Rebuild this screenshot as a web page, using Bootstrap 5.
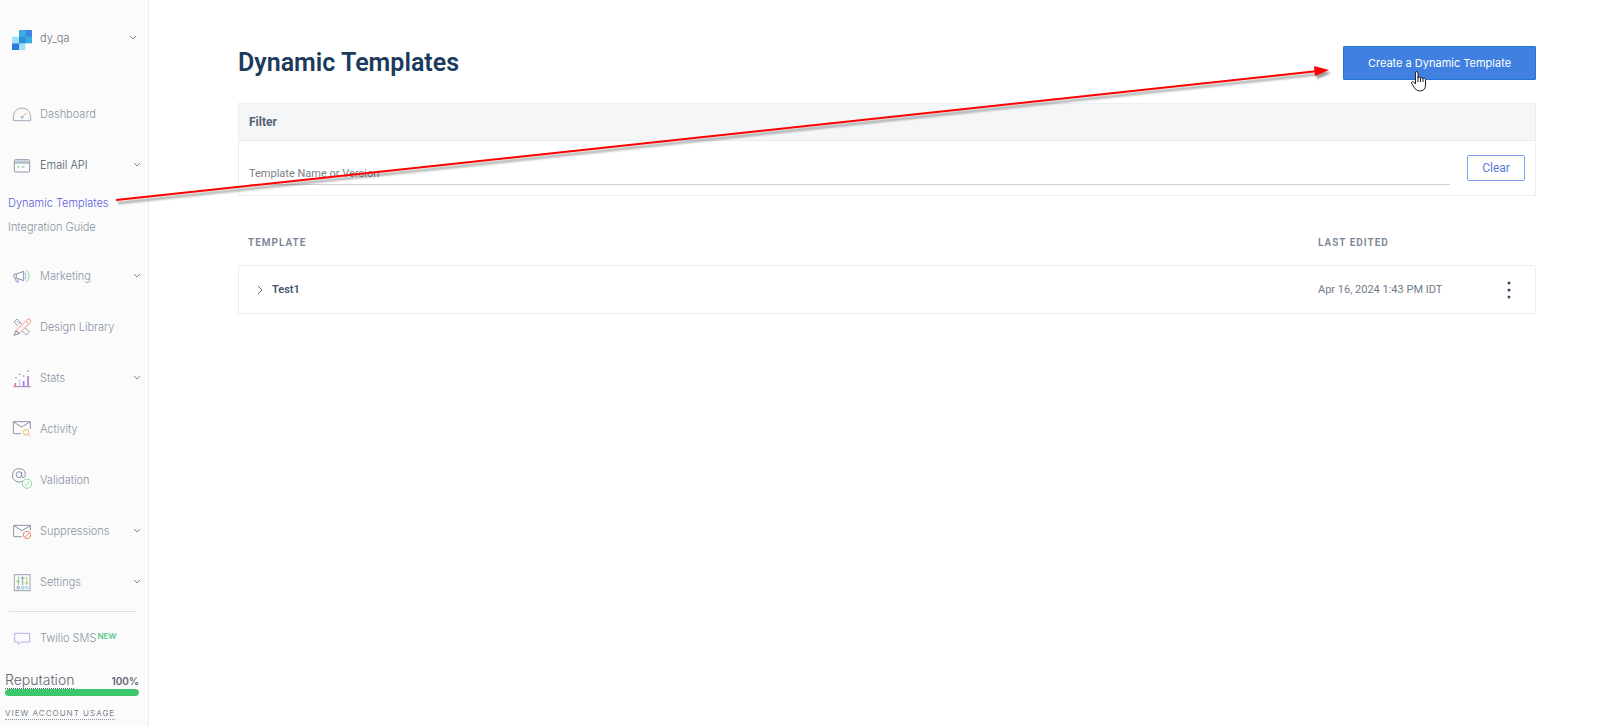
<!DOCTYPE html>
<html lang="en">
<head>
<meta charset="utf-8">
<meta name="viewport" content="width=device-width, initial-scale=1">
<title>Dynamic Templates</title>
<link href="https://cdn.jsdelivr.net/npm/bootstrap@5.3.0/dist/css/bootstrap.min.css" rel="stylesheet">
<style>
  body { font-family: Roboto, "Liberation Sans", sans-serif; font-size: 12px; line-height: 20px; color: #6f7a88; background: #fff; }
  svg { display: block; }
  .sidebar { width: 149px; background: #fbfbfb; border-right: 1px solid #e9ecf1; font-family: Inter, sans-serif; font-size: 11px; font-weight: 300; color: #8a93a5; }
  .sidebar a, .sidebar button { color: inherit; text-decoration: none; font-weight: inherit; font-size: inherit; }
  .sidebar .account { height: 80px; margin-bottom: 8px; color: #6b7380; }
  .side-item { height: 51px; padding: 0 8px 0 12px; gap: 8px; text-align: left; }
  .side-item.open { color: #4d5a6c; }
  .side-item .pic { width: 20px; height: 20px; flex: none; }
  .side-item .chev { width: 6px; height: 6px; flex: none; margin-left: auto; fill: none; stroke: #7b8696; stroke-width: 1; }
  .sub-menu { padding: 1px 0 11px 8px; }
  .sub-link { height: 24px; line-height: 24px; }
  .sidebar a.current { color: #5b62dc; }
  .divider { height: 1px; margin: 4px 12px 0 9px; background: #dcdee2; }
  .new-tag { font-size: 8px; font-weight: 600; color: #5cc98a; line-height: 16px; padding-left: 1px; }
  .reputation { padding: 8px 9px 0 5px; }
  .sidebar .rep-title { font-size: 14px; line-height: 17px; border-bottom: 1px dotted #5c6674; color: #5c6674; }
  .rep-value { font-size: 10px; font-weight: 600; line-height: 16px; color: #5c6674; }
  .meter { height: 7px; border-radius: 4px; background: #dfe5ea; }
  .meter .progress-bar { background: #3dc76d; border-radius: 4px; }
  .sidebar .usage { font-size: 8px; font-weight: 400; letter-spacing: 1px; line-height: 11px; margin-top: 12px; border-bottom: 1px dotted #8c949f; color: #7b8490; }
  .page { padding: 46px 64px 40px 89px; }
  h1 { font-family: Roboto, sans-serif; font-size: 25px; line-height: 34px; font-weight: 600; color: #1b3a5c; }
  .btn-create { height: 34px; width: 193px; padding: 0; border-radius: 1px; font-family: Inter, sans-serif; font-size: 11px; color: #fff; background: #3f80e0; border: 1px solid #2475d9; }
  .btn-create:hover { color: #fff; background: #2f72d6; }
  .filter-box { margin-top: 23px; border: 1px solid #eceef0; }
  .filter-head { height: 37px; padding: 0 10px; background: #f4f6f8; border-bottom: 1px solid #e9ebee; font-weight: 700; color: #546375; }
  .filter-body { padding: 14px 10px 10px; gap: 17px; height: 54px; }
  .filter-input { height: 24px; margin-top: 6px; padding: 2px 0 0; border: 0; border-bottom: 1px solid #cfd1d4; border-radius: 0; font-size: 11px; line-height: 20px; color: #5a6573; background: transparent; }
  .filter-input::placeholder { color: #7d8085; }
  .btn-clear { width: 58px; height: 26px; padding: 0; border: 1px solid #7ba5ec; border-radius: 2px; font-size: 12px; line-height: 20px; color: #6079db; }
  .tpl-table { margin-top: 23px; border-collapse: separate; border-spacing: 0; }
  .tpl-table th { height: 46px; padding: 2px 0 0 10px; font-size: 10px; font-weight: 600; letter-spacing: 1px; color: #7a8594; }
  .tpl-table td { height: 49px; padding: 0; border: solid #ededee; border-width: 1px 0; font-size: 11px; color: #6f7a88; }
  .tpl-table td:first-child { border-left-width: 1px; border-radius: 2px 0 0 2px; }
  .tpl-table td:last-child { border-right-width: 1px; border-radius: 0 2px 2px 0; }
  .tpl-table .when { width: 170px; padding-left: 0; }
  .tpl-table .acts { width: 48px; padding: 0; }
  .tpl-name { padding: 0 17px; gap: 8px; font-size: 11px; line-height: 20px; font-weight: 600; color: #46566a; }
  .pointer-layer { height: 240px; pointer-events: none; }
</style>
</head>
<body>
<div class="d-flex min-vh-100 position-relative">
  <nav class="sidebar d-flex flex-column flex-shrink-0" aria-label="Main">
    <button type="button" class="account btn p-0 border-0 rounded-0 d-flex align-items-center w-100">
      <span class="side-item d-flex align-items-center w-100 pe-2">
        <svg class="pic" viewBox="0 0 60 60"><path fill="#36aee4" d="M21 0h39v40H21z"/><path fill="#4182e0" d="M41 0h19v20H41z"/><path fill="#9fe1f4" d="M0 20h21v20H0zM21 40h19v20H21z"/><path fill="#2d93d8" d="M21 20h20v20H21z"/><path fill="#287be0" d="M0 40h21v20H0z"/></svg>
        <span class="pb-1">dy_qa</span>
        <svg class="chev me-1 mb-1" viewBox="1 1 6 6"><path d="M1 2l3 3 3-3"/></svg>
      </span>
    </button>
    <a href="#" class="side-item d-flex align-items-center">
      <svg class="pic" viewBox="36 312 60 60" fill="none" stroke-width="3"><path stroke="#a3acba" d="M40 362V350a26 26 0 0 1 52 0v12z"/><path stroke="#f6dc96" stroke-dasharray="3 8" d="M47 352a19 19 0 0 1 38 0"/><path stroke="#ef9a8c" d="M68 350l11-11"/><circle cx="66" cy="352" r="3" stroke="#88a5d2"/></svg>
      <span>Dashboard</span>
    </a>
    <a href="#" class="side-item open d-flex align-items-center">
      <svg class="pic" viewBox="36 44 60 60" fill="none" stroke-width="3"><rect x="43" y="58" width="46" height="37" rx="3" stroke="#8d98a9"/><path fill="#c6ccd6" d="M44 60h44v7H44z"/><path stroke="#8d98a9" d="M43 68h46"/><path stroke="#72cf84" d="M52 76l5 4-5 4M64 80h10"/></svg>
      <span>Email API</span><svg class="chev" viewBox="1 1 6 6"><path d="M1 2l3 3 3-3"/></svg>
    </a>
    <div class="sub-menu d-flex flex-column">
      <a href="#" class="sub-link current">Dynamic Templates</a>
      <a href="#" class="sub-link">Integration Guide</a>
    </div>
    <a href="#" class="side-item d-flex align-items-center">
      <svg class="pic" viewBox="36 49 60 60" fill="none" stroke-width="3"><path stroke="#8793aa" d="M49 73l22-8v28l-22-8h-6q-3-6 0-12zM49 73v12"/><path stroke="#9a94d8" d="M46 86l3 11h6l-2-10"/><path stroke="#8ac4ee" d="M75 69q6 10 0 20"/><path stroke="#8bdca6" d="M80 61q15 18 0 36"/></svg>
      <span>Marketing</span><svg class="chev" viewBox="1 1 6 6"><path d="M1 2l3 3 3-3"/></svg>
    </a>
    <a href="#" class="side-item d-flex align-items-center">
      <svg class="pic" viewBox="36 202 60 60" fill="none" stroke-width="3"><path stroke="#9aa4b3" d="M42 217l9-9 9 9-3 4 4-2 4 6m9 9l15 12-10 10-15-14M42 217l12 12M50 215l4 4"/><path stroke="#ed9384" fill="#fbfbfb" d="M48 243l34-34q4-3 8 1t1 8L57 252zM77 214l9 9"/><path stroke="#8793a3" d="M48 243l-6 14 15-5zM48 243l9 9"/></svg>
      <span>Design Library</span>
    </a>
    <a href="#" class="side-item d-flex align-items-center">
      <svg class="pic" viewBox="36 353 60 60" fill="none" stroke-width="5"><path stroke="#8a86a8" stroke-width="3" d="M40 409h52"/><path stroke="#e8709c" d="M46 398v10"/><path stroke="#e5c4ec" d="M59 387v21"/><path stroke="#9a7ce8" d="M71 392v16"/><path stroke="#b577cc" d="M84 377v31"/><path fill="#7d879c" d="M46 380h4v4h-4zM57 370h4v4h-4zM69 375h4v4h-4zM82 360h4v4h-4z"/></svg>
      <span>Stats</span><svg class="chev" viewBox="1 1 6 6"><path d="M1 2l3 3 3-3"/></svg>
    </a>
    <a href="#" class="side-item d-flex align-items-center">
      <svg class="pic" viewBox="36 56 60 60" fill="none" stroke-width="3"><path stroke="#8a94a6" d="M63 100H40V64h51v22M41 65l24 15 25-15"/><circle cx="78" cy="96" r="8" stroke="#f5b767"/><path stroke="#f5b767" d="M84 102l7 7"/></svg>
      <span>Activity</span>
    </a>
    <a href="#" class="side-item d-flex align-items-center">
      <svg class="pic overflow-visible" viewBox="36 207 60 60" fill="none" stroke-width="3"><path stroke="#8a94a6" d="M69 240q-12 7-23 0T38 222q0-19 19-19t19 18q0 9-7 9-4 0-4-6V213M65 221a8 9 0 1 1-16 0 8 9 0 0 1 16 0"/><circle cx="81" cy="248" r="14" stroke="#86dba5"/><path stroke="#86dba5" d="M74 249l5 5 9-11"/></svg>
      <span>Validation</span>
    </a>
    <a href="#" class="side-item d-flex align-items-center">
      <svg class="pic" viewBox="36 360 60 60" fill="none" stroke-width="3"><path stroke="#8a94a6" d="M65 407H41V373h50v15M42 374l24 15 25-15"/><circle cx="81" cy="402" r="11" stroke="#ec8878"/><path stroke="#ec8878" d="M74 409l14-14"/></svg>
      <span>Suppressions</span><svg class="chev" viewBox="1 1 6 6"><path d="M1 2l3 3 3-3"/></svg>
    </a>
    <a href="#" class="side-item d-flex align-items-center">
      <svg class="pic" viewBox="36 63 60 60" fill="none" stroke-width="3"><rect x="43" y="71" width="47" height="48" stroke="#99a3b3"/><path stroke="#7fcd8b" d="M55 77v25M49 91h12"/><path stroke="#8b98a8" d="M68 77v25M62 81h12"/><path stroke="#b5ca70" d="M80 77v25M74 96h12"/><circle cx="55" cy="110" r="4" stroke="#8c8fc0"/><circle cx="68" cy="110" r="4" stroke="#84b5e8"/><circle cx="80" cy="110" r="4" stroke="#8bd0e8"/></svg>
      <span>Settings</span><svg class="chev" viewBox="1 1 6 6"><path d="M1 2l3 3 3-3"/></svg>
    </a>
    <div class="divider"></div>
    <a href="#" class="side-item d-flex align-items-center">
      <svg class="pic" viewBox="36 231 60 60" fill="none" stroke="#c3a9ec" stroke-width="3"><path d="M44 247h45v26H63l-8 7v-7H44z"/></svg>
      <span class="d-flex">Twilio SMS<span class="new-tag">NEW</span></span>
    </a>
    <div class="reputation">
      <div class="d-flex justify-content-between align-items-end">
        <a href="#" class="rep-title">Reputation</a>
        <span class="rep-value">100%</span>
      </div>
      <div class="progress meter" role="progressbar" aria-label="Reputation" aria-valuenow="100" aria-valuemin="0" aria-valuemax="100"><div class="progress-bar" style="width:100%"></div></div>
      <div class="d-flex"><a href="#" class="usage">VIEW ACCOUNT USAGE</a></div>
    </div>
  </nav>

  <main class="page flex-grow-1">
    <div class="d-flex justify-content-between align-items-center">
      <h1 class="m-0">Dynamic Templates</h1>
      <button type="button" class="btn btn-create">Create a Dynamic Template</button>
    </div>
    <section class="filter-box">
      <div class="filter-head d-flex align-items-center"><label for="tplFilter">Filter</label></div>
      <div class="filter-body d-flex">
        <input id="tplFilter" type="text" class="form-control filter-input" placeholder="Template Name or Version">
        <button type="button" class="btn btn-clear flex-shrink-0">Clear</button>
      </div>
    </section>
    <table class="tpl-table w-100">
      <thead><tr><th scope="col">TEMPLATE</th><th scope="col" class="when ps-0">LAST EDITED</th><th class="acts"></th></tr></thead>
      <tbody><tr>
        <td><button type="button" class="btn border-0 tpl-name d-flex align-items-center"><svg width="8" height="10" viewBox="0 0 8 10" fill="none" stroke="#5f6b7c"><path d="M2 1l4 4-4 4"/></svg>Test1</button></td>
        <td class="when">Apr 16, 2024 1:43 PM IDT</td>
        <td class="acts"><button type="button" class="btn border-0 p-0 ps-3" aria-label="Actions"><svg width="10" height="20" viewBox="0 0 10 20" fill="#35496a"><circle cx="5" cy="3" r="1.5"/><circle cx="5" cy="10" r="1.5"/><circle cx="5" cy="17" r="1.5"/></svg></button></td>
      </tr></tbody>
    </table>
  </main>

  <svg class="pointer-layer position-absolute top-0 start-0 w-100" viewBox="0 0 1600 240" preserveAspectRatio="none" aria-hidden="true">
    <defs><filter id="soft" x="-5%" y="-20%" width="110%" height="140%"><feGaussianBlur stdDeviation="1.3"/></filter></defs>
    <g filter="url(#soft)" opacity=".5" transform="translate(2 3)"><path stroke="#333" stroke-width="2" d="M116 200L1318 71"/><path fill="#333" d="M1314 66l15 4-14 6z"/></g>
    <path stroke="#f00" stroke-width="2" d="M116 200L1318 71"/><path fill="#f00" d="M1314 66l15 4-14 6z"/>
    <path transform="translate(1411 71)" fill="#fff" stroke="#222" stroke-width="1" stroke-linejoin="round" d="M4.500 13V2q0-1.500 1.300-1.500T7 2v5q.2-1 1.300-1T9.500 7.500q.2-1 1.300-1t1.200 1.500q.2-.8 1.200-.8t1.300 1.300V14q0 6-6 6-3 0-5-3L.8 12.500q-.8-1.500.5-2 1-.3 3.200 2.500M7 6v5m2.500-4v4M12 8v3"/>
  </svg>
</div>
<script src="https://cdn.jsdelivr.net/npm/bootstrap@5.3.0/dist/js/bootstrap.bundle.min.js"></script>
</body>
</html>
